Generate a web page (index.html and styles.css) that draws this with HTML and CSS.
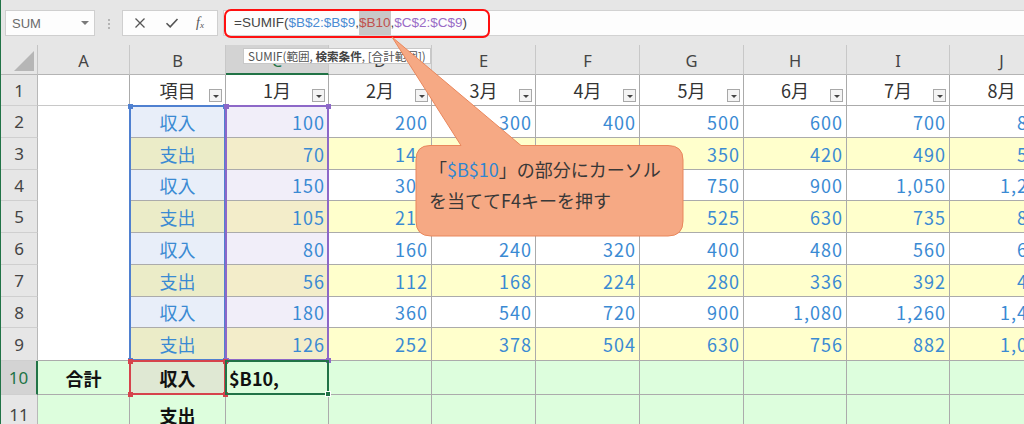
FILE: index.html
```html
<!DOCTYPE html>
<html lang="ja">
<head>
<meta charset="utf-8">
<title>SUMIF</title>
<link rel="stylesheet" href="styles.css">
</head>
<body>
<div class="app">
  <div class="fbar">
    <div class="namebox"><span class="nb-text">SUM</span><span class="nb-caret"></span></div>
    <div class="grip"><i></i><i></i><i></i></div>
    <div class="fbtns">
      <svg class="ico-x" width="12" height="12" viewBox="0 0 12 12"><path d="M1.5 1.5 L10.5 10.5 M10.5 1.5 L1.5 10.5" stroke="#555" stroke-width="1.3" fill="none"/></svg>
      <svg class="ico-ok" width="14" height="12" viewBox="0 0 14 12"><path d="M1.5 6.2 L5.2 9.8 L12.5 2" stroke="#555" stroke-width="1.6" fill="none"/></svg>
      <span class="fx">f<sub>x</sub></span>
    </div>
    <div class="finput"><span class="f-plain">=SUMIF(</span><span class="f-blue">$B$2:$B$9</span><span class="f-plain">,</span><span class="f-red">$B10</span><span class="f-plain">,</span><span class="f-purple">$C$2:$C$9</span><span class="f-plain">)</span></div>
    <div class="redbox"></div>
  </div>

  <div class="sheet">
    <!-- header -->
    <div class="corner"><span class="tri"></span></div>
    <div class="hd">A</div><div class="hd">B</div><div class="hd hsel">C</div><div class="hd">D</div><div class="hd">E</div><div class="hd">F</div><div class="hd">G</div><div class="hd">H</div><div class="hd">I</div><div class="hd">J</div>

    <!-- row 1 -->
    <div class="rh">1</div>
    <div class="c ca1"></div>
    <div class="c t hdr">項目<i class="flt"></i></div>
    <div class="c t hdr">1月<i class="flt"></i></div>
    <div class="c t hdr">2月<i class="flt"></i></div>
    <div class="c t hdr">3月<i class="flt"></i></div>
    <div class="c t hdr">4月<i class="flt"></i></div>
    <div class="c t hdr">5月<i class="flt"></i></div>
    <div class="c t hdr">6月<i class="flt"></i></div>
    <div class="c t hdr">7月<i class="flt"></i></div>
    <div class="c t hdr">8月<i class="flt"></i></div>

    <!-- row 2 -->
    <div class="rh">2</div>
    <div class="c ca"></div>
    <div class="c t bw">収入</div><div class="c n cw">100</div>
    <div class="c n">200</div><div class="c n">300</div><div class="c n">400</div><div class="c n">500</div><div class="c n">600</div><div class="c n">700</div><div class="c n">800</div>

    <!-- row 3 -->
    <div class="rh">3</div>
    <div class="c ca"></div>
    <div class="c t by">支出</div><div class="c n cy">70</div>
    <div class="c n y">140</div><div class="c n y">210</div><div class="c n y">280</div><div class="c n y">350</div><div class="c n y">420</div><div class="c n y">490</div><div class="c n y">560</div>

    <!-- row 4 -->
    <div class="rh">4</div>
    <div class="c ca"></div>
    <div class="c t bw">収入</div><div class="c n cw">150</div>
    <div class="c n">300</div><div class="c n">450</div><div class="c n">600</div><div class="c n">750</div><div class="c n">900</div><div class="c n">1,050</div><div class="c n">1,200</div>

    <!-- row 5 -->
    <div class="rh">5</div>
    <div class="c ca"></div>
    <div class="c t by">支出</div><div class="c n cy">105</div>
    <div class="c n y">210</div><div class="c n y">315</div><div class="c n y">420</div><div class="c n y">525</div><div class="c n y">630</div><div class="c n y">735</div><div class="c n y">840</div>

    <!-- row 6 -->
    <div class="rh">6</div>
    <div class="c ca"></div>
    <div class="c t bw">収入</div><div class="c n cw">80</div>
    <div class="c n">160</div><div class="c n">240</div><div class="c n">320</div><div class="c n">400</div><div class="c n">480</div><div class="c n">560</div><div class="c n">640</div>

    <!-- row 7 -->
    <div class="rh">7</div>
    <div class="c ca"></div>
    <div class="c t by">支出</div><div class="c n cy">56</div>
    <div class="c n y">112</div><div class="c n y">168</div><div class="c n y">224</div><div class="c n y">280</div><div class="c n y">336</div><div class="c n y">392</div><div class="c n y">448</div>

    <!-- row 8 -->
    <div class="rh">8</div>
    <div class="c ca"></div>
    <div class="c t bw">収入</div><div class="c n cw">180</div>
    <div class="c n">360</div><div class="c n">540</div><div class="c n">720</div><div class="c n">900</div><div class="c n">1,080</div><div class="c n">1,260</div><div class="c n">1,440</div>

    <!-- row 9 -->
    <div class="rh">9</div>
    <div class="c ca9"></div>
    <div class="c t by">支出</div><div class="c n cy">126</div>
    <div class="c n y">252</div><div class="c n y">378</div><div class="c n y">504</div><div class="c n y">630</div><div class="c n y">756</div><div class="c n y">882</div><div class="c n y">1,008</div>

    <!-- row 10 -->
    <div class="rh rsel">10</div>
    <div class="c g t k">合計</div>
    <div class="c gb t k">収入</div>
    <div class="c g k tl">$B10,</div>
    <div class="c g"></div><div class="c g"></div><div class="c g"></div><div class="c g"></div><div class="c g"></div><div class="c g"></div><div class="c g"></div>

    <!-- row 11 -->
    <div class="rh">11</div>
    <div class="c g"></div>
    <div class="c g t k">支出</div>
    <div class="c g"></div>
    <div class="c g"></div><div class="c g"></div><div class="c g"></div><div class="c g"></div><div class="c g"></div><div class="c g"></div><div class="c g"></div>

    <!-- range highlights -->
    <div class="rng rng-b"><i class="q q1"></i><i class="q q2"></i><i class="q q3"></i><i class="q q4"></i></div>
    <div class="rng rng-c"><i class="q q1"></i><i class="q q2"></i><i class="q q3"></i><i class="q q4"></i></div>
    <div class="rng rng-r"><i class="q q1"></i><i class="q q2"></i><i class="q q3"></i><i class="q q4"></i></div>
    <div class="rng rng-act"><i class="q q4"></i></div>
  </div>

  <div class="tooltip">SUMIF(範囲, <b>検索条件</b>, [合計範囲])</div>

  <svg class="callout" width="1024" height="424" viewBox="0 0 1024 424">
    <path d="M430 145.5 L461 145.5 L392 37 L521 145.5 L668 145.5 Q683 145.5 683 160 L683 221 Q683 236 668 236 L431 236 Q416 236 416 221 L416 160 Q416 145.5 430 145.5 Z" fill="#f6a984" stroke="#e9875c" stroke-width="1"/>
  </svg>
  <div class="callout-text">「<span class="ct-blue">$B$10</span>」の部分にカーソル<br>を当ててF4キーを押す</div>
</div>
</body>
</html>
```

FILE: styles.css
```css
* { box-sizing: border-box; margin: 0; padding: 0; }
html, body { width: 1024px; height: 424px; overflow: hidden; }
body {
  background: #e6e6e6;
  font-family: "Noto Sans CJK JP", "Noto Sans", sans-serif;
}
.app {
  position: relative;
  width: 1024px;
  height: 424px;
  overflow: hidden;
  border-left: 1px solid #217346;
}

/* ---------- formula bar ---------- */
.fbar {
  position: relative;
  height: 45px;
  display: flex;
  align-items: flex-start;
  padding-top: 10px;
}
.namebox {
  margin-left: 4px;
  width: 90px;
  height: 26px;
  background: #fdfdfd;
  border: 1px solid #cfcfcf;
  display: flex;
  align-items: center;
  justify-content: space-between;
  padding: 0 5px 0 6px;
}
.nb-text { font: 13px "Liberation Sans", sans-serif; color: #6a6a6a; }
.nb-caret {
  width: 0; height: 0;
  border-left: 4px solid transparent;
  border-right: 4px solid transparent;
  border-top: 4px solid #7a7a7a;
}
.grip {
  width: 27px;
  height: 26px;
  display: flex;
  flex-direction: column;
  align-items: center;
  gap: 2px;
  padding-top: 9px;
}
.grip i { display: block; width: 2px; height: 2px; background: #b4b4b4; }
.fbtns {
  width: 96px;
  height: 26px;
  background: #fdfdfd;
  border: 1px solid #cfcfcf;
  display: flex;
  align-items: center;
  padding-left: 11px;
}
.ico-x { margin-right: 19px; }
.ico-ok { margin-right: 17px; }
.fx {
  font: italic 14px "Liberation Serif", serif;
  color: #555;
  line-height: 1;
}
.fx sub { font-size: 9px; vertical-align: -1px; }
.finput {
  margin-left: 5px;
  flex: 1;
  height: 26px;
  background: #fdfdfd;
  border: 1px solid #d2d2d2;
  border-right: none;
  display: flex;
  padding-left: 10px;
  font: 13.5px "Liberation Sans", sans-serif;
  line-height: 24px;
  white-space: nowrap;
}
.f-plain { color: #444; }
.f-blue { color: #4a8bd3; }
.f-red { color: #c0504d; background: #c8c8c8; }
.f-purple { color: #9a6cc6; }
.redbox {
  position: absolute;
  left: 223px;
  top: 9px;
  width: 266px;
  height: 29px;
  border: 2.5px solid #ff1010;
  border-radius: 7px;
}

/* ---------- sheet ---------- */
.sheet {
  position: relative;
  display: grid;
  grid-template-columns: 37px 92px 96px 103px 103px 104px 104px 104px 103px 103px 104px;
  grid-template-rows: 30px 31px 32px 32px 31px 32px 32px 32px 31px 33px 34px 40px;
  width: 1023px;
  height: 379px;
  overflow: hidden;
}
.corner {
  background: #e6e6e6;
  border-right: 1px solid #c4c4c4;
  border-bottom: 1px solid #b8b8b8;
  position: relative;
}
.tri {
  position: absolute;
  right: 3px;
  bottom: 3px;
  width: 0; height: 0;
  border-left: 20px solid transparent;
  border-bottom: 20px solid #b6b6b6;
}
.hd {
  background: #e6e6e6;
  border-right: 1px solid #c8c8c8;
  border-bottom: 1px solid #b4b4b4;
  display: flex;
  align-items: center;
  justify-content: center;
  font: 16.5px "Noto Sans", sans-serif;
  color: #444;
  padding-top: 2px;
}
.hsel {
  background: #d3d3d3;
  color: #217346;
  border-bottom: 2px solid #217346;
}
.rh {
  background: #e6e6e6;
  border-right: 1px solid #b8b8b8;
  border-bottom: 1px solid #cfcfcf;
  display: flex;
  align-items: center;
  justify-content: center;
  font: 17px "Noto Sans", sans-serif;
  color: #444;
}
.rsel {
  background: #d3d3d3;
  color: #217346;
  border-right: 2px solid #217346;
}

.c {
  position: relative;
  background: #ffffff;
  border-right: 1px solid #ababab;
  border-bottom: 1px solid #ababab;
  display: flex;
  align-items: center;
  font-size: 18px;
  color: #3a8ad3;
  white-space: nowrap;
}
.ca1 { border-right-color: #ababab; border-bottom-color: #c8c8c8; }
.ca { border-bottom-color: #ffffff; }
.ca9 { border-bottom-color: #ababab; }
.t { justify-content: center; }
.tl { justify-content: flex-start; padding-left: 3px; }
.n { justify-content: flex-end; padding-right: 3px; letter-spacing: 1px; }
.hdr { color: #333; }
.k { font-weight: 700; color: #111; }
.y { background: #ffffcc; }
.bw { background: #e8eef9; }
.by { background: #ebecc8; }
.cw { background: #f1eef9; }
.cy { background: #f3edca; }
.g { background: #ddfedd; }
.gb { background: #dfe8d3; }

.flt {
  position: absolute;
  right: 3px;
  bottom: 3px;
  width: 13px;
  height: 13px;
  background: #f4f4f4;
  border: 1px solid #a8a8a8;
}
.flt::after {
  content: "";
  position: absolute;
  left: 3px;
  top: 5px;
  border-left: 3px solid transparent;
  border-right: 3px solid transparent;
  border-top: 3px solid #444;
}

/* range highlights (overlays placed on the grid) */
.rng {
  position: absolute;
  pointer-events: none;
  top: -1px;
  left: -1px;
  right: 0;
  bottom: 0;
  border: 2px solid;
}
.rng-b { grid-column: 3 / 4; grid-row: 3 / 11; border-color: #4f80d0; color: #4f80d0; }
.rng-c { grid-column: 4 / 5; grid-row: 3 / 11; border-color: #8d68c8; color: #8d68c8; }
.rng-r { grid-column: 3 / 4; grid-row: 11 / 12; border-color: #d6434c; color: #d6434c; }
.rng-act { grid-column: 4 / 5; grid-row: 11 / 12; border-color: #217346; color: #217346; }
.q {
  position: absolute;
  width: 5px;
  height: 5px;
  background: currentColor;
}
.q1 { left: -3.5px; top: -3.5px; }
.q2 { right: -3.5px; top: -3.5px; }
.q3 { left: -3.5px; bottom: -3.5px; }
.q4 { right: -3.5px; bottom: -3.5px; }
.rng-act .q4 { width: 6px; height: 6px; right: -4px; bottom: -4px; border: 1px solid #fff; }

/* tooltip */
.tooltip {
  position: absolute;
  left: 242px;
  top: 48px;
  height: 16px;
  padding: 0 4px;
  background: #fff;
  border: 1px solid #c8c8c8;
  font-size: 11.6px;
  line-height: 14px;
  color: #555;
  white-space: nowrap;
}
.tooltip b { font-weight: 700; color: #444; }

/* callout */
.callout {
  position: absolute;
  left: -1px;
  top: 0;
  pointer-events: none;
}
.callout-text {
  position: absolute;
  left: 428px;
  top: 154px;
  font-size: 18px;
  line-height: 31px;
  color: #383838;
  white-space: nowrap;
}
.ct-blue { color: #2f86d1; }
```
